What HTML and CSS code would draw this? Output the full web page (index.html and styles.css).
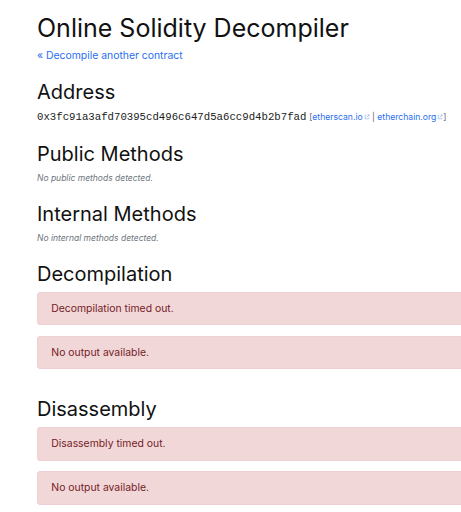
FILE: index.html
```html
<!DOCTYPE html>
<html>
<head>
<meta charset="utf-8">
<link rel="stylesheet" href="styles.css">
</head>
<body>
<div class="container">
  <h1 class="title">Online Solidity Decompiler</h1>
  <a class="back" href="#">« Decompile another contract</a>

  <h2 class="section first">Address</h2>
  <p class="address"><code>0x3fc91a3afd70395cd496c647d5a6cc9d4b2b7fad</code> <span class="ext">[<a href="#">etherscan.io<svg class="ico" viewBox="0 0 10 10"><path d="M4 2H2v6h6V6M6 1.5h2.5V4M8.5 1.5L4.5 5.5" fill="none" stroke="currentColor" stroke-width="1"/></svg></a> | <a href="#">etherchain.org<svg class="ico" viewBox="0 0 10 10"><path d="M4 2H2v6h6V6M6 1.5h2.5V4M8.5 1.5L4.5 5.5" fill="none" stroke="currentColor" stroke-width="1"/></svg></a>]</span></p>

  <h2 class="section">Public Methods</h2>
  <p class="note">No public methods detected.</p>

  <h2 class="section">Internal Methods</h2>
  <p class="note">No internal methods detected.</p>

  <h2 class="section">Decompilation</h2>
  <div class="alert">Decompilation timed out.</div>
  <div class="alert">No output available.</div>

  <h2 class="section">Disassembly</h2>
  <div class="alert">Disassembly timed out.</div>
  <div class="alert">No output available.</div>
</div>
</body>
</html>
```

FILE: styles.css
```css
html, body {
  margin: 0;
  padding: 0;
  overflow: hidden;
  background: #fff;
}
body {
  font-family: Inter, "Liberation Sans", sans-serif;
  font-size: 10.4px;
  line-height: 15.6px;
  color: #212529;
}
.container {
  display: flex;
  flex-direction: column;
  width: 540px;
  padding: 13px 0 0 37px;
}
.title {
  font-size: 25px;
  font-weight: 400;
  line-height: 30px;
  margin: 0 0 5.4px;
  color: #111;
}
.back {
  align-self: flex-start;
  color: #2a6ef0;
  text-decoration: none;
}
.section {
  font-size: 20px;
  font-weight: 400;
  line-height: 24px;
  margin: 17.7px 0 5.5px;
  color: #111;
}
.section.first {
  margin-top: 15.7px;
}
.address {
  margin: 0;
  height: 15.6px;
}
.address code {
  font-family: "Liberation Mono", monospace;
  font-size: 10.7px;
  line-height: 1;
  color: #222;
}
.ext {
  font-size: 8.6px;
  line-height: 1;
  color: #666;
}
.ext a {
  color: #2a6ef0;
  text-decoration: none;
}
.ico {
  width: 6px;
  height: 6px;
  margin-left: 1px;
  vertical-align: baseline;
  color: #8aa8e8;
}
.note {
  margin: 0;
  font-size: 8.5px;
  line-height: 12.75px;
  font-style: italic;
  color: #6c757d;
}
.alert {
  background: #f2d7d9;
  border: 1px solid #efd0d3;
  border-radius: 3px;
  color: #721c24;
  padding: 8px 13.3px;
  margin-bottom: 10.4px;
}
```
